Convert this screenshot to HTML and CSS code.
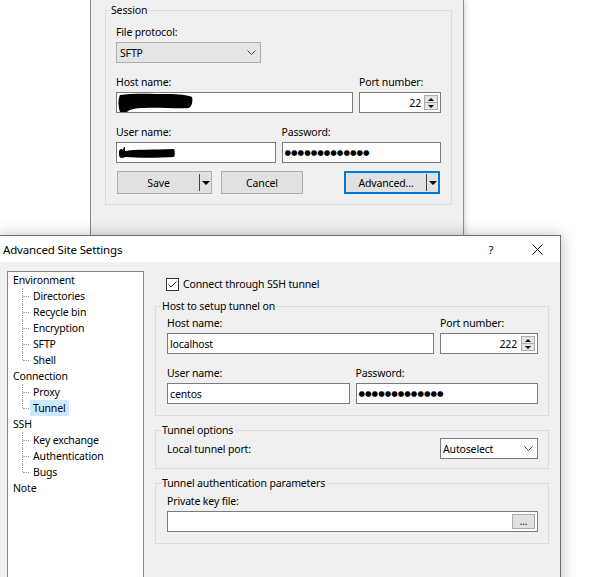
FILE: index.html
```html
<!DOCTYPE html>
<html lang="en">
<head>
  <meta charset="utf-8"/>
  <meta name="viewport" content="width=device-width,initial-scale=1"/>
  <title>Advanced Site Settings</title>
  <link rel="stylesheet" href="styles.css">
</head>
<body>
  <div class="desktop">

    <!-- login dialog, sitting behind the settings window -->
    <section class="window login">
      <div class="site-list"></div>
      <div class="login-pane">
        <fieldset class="group session">
          <legend>Session</legend>
          <div class="field">
            <span class="caption">File protocol:</span>
            <div class="combo protocol">
              <span>SFTP</span>
              <svg class="chev" width="9" height="5" viewBox="0 0 9 5"><path d="M.5 .5 4.5 4.5 8.5 .5"/></svg>
            </div>
          </div>
          <div class="cols cols-port">
            <div class="field">
              <span class="caption">Host name:</span>
              <div class="edit">
                <svg class="blot" width="76" height="20" viewBox="0 0 76 20"><path d="M2 2 C14 0 34 1 50 1 C60 1 70 2 74 4 C75 8 74 13 71 15 C58 16 40 14 26 15 C18 15 12 16 9 19 L2 19 C0 14 0 6 2 2 Z"/></svg>
              </div>
            </div>
            <div class="field">
              <span class="caption">Port number:</span>
              <div class="edit number">
                <span>22</span>
                <span class="spinner"><i class="up"></i><i class="down"></i></span>
              </div>
            </div>
          </div>
          <div class="cols cols-half">
            <div class="field">
              <span class="caption">User name:</span>
              <div class="edit">
                <svg class="blot" width="60" height="14" viewBox="0 0 60 14"><path d="M1 6 C1 3 4 2 5 4 L6 1 L7 1 L7 5 C16 3 36 4 56 3 C57 5 57 10 56 11 C40 12 20 12 8 11 L4 12 C1 12 1 9 1 6 Z"/></svg>
              </div>
            </div>
            <div class="field">
              <span class="caption">Password:</span>
              <div class="edit"><span class="dots">●●●●●●●●●●●●●</span></div>
            </div>
          </div>
          <div class="buttons">
            <button class="btn split save"><span class="label">Save</span><i class="drop"></i></button>
            <button class="btn cancel">Cancel</button>
            <button class="btn split advanced"><span class="label">Advanced...</span><i class="drop"></i></button>
          </div>
        </fieldset>
      </div>
    </section>

    <!-- advanced site settings dialog -->
    <section class="window settings">
      <header class="titlebar">
        <span class="title">Advanced Site Settings</span>
        <span class="caption-btn help">?</span>
        <span class="caption-btn close">
          <svg width="11" height="11" viewBox="0 0 11 11"><path d="M.5 .5 10.5 10.5 M10.5 .5 .5 10.5"/></svg>
        </span>
      </header>

      <div class="settings-body">
        <ul class="tree">
          <li><span class="node">Environment</span>
            <ul>
              <li><span class="node">Directories</span></li>
              <li><span class="node">Recycle bin</span></li>
              <li><span class="node">Encryption</span></li>
              <li><span class="node">SFTP</span></li>
              <li><span class="node">Shell</span></li>
            </ul>
          </li>
          <li><span class="node">Connection</span>
            <ul>
              <li><span class="node">Proxy</span></li>
              <li><span class="node selected">Tunnel</span></li>
            </ul>
          </li>
          <li><span class="node">SSH</span>
            <ul>
              <li><span class="node">Key exchange</span></li>
              <li><span class="node">Authentication</span></li>
              <li><span class="node">Bugs</span></li>
            </ul>
          </li>
          <li><span class="node">Note</span></li>
        </ul>

        <div class="page">
          <label class="check-row">
            <span class="checkbox">
              <svg width="13" height="13" viewBox="0 0 13 13"><path d="M2.5 6.5 5 9 10.5 3.5"/></svg>
            </span>
            Connect through SSH tunnel
          </label>

          <fieldset class="group tunnel-host">
            <legend>Host to setup tunnel on</legend>
            <div class="cols cols-port">
              <div class="field">
                <span class="caption">Host name:</span>
                <div class="edit"><span>localhost</span></div>
              </div>
              <div class="field">
                <span class="caption">Port number:</span>
                <div class="edit number">
                  <span>222</span>
                  <span class="spinner"><i class="up"></i><i class="down"></i></span>
                </div>
              </div>
            </div>
            <div class="cols cols-half">
              <div class="field">
                <span class="caption">User name:</span>
                <div class="edit"><span>centos</span></div>
              </div>
              <div class="field">
                <span class="caption">Password:</span>
                <div class="edit"><span class="dots">●●●●●●●●●●●●●</span></div>
              </div>
            </div>
          </fieldset>

          <fieldset class="group tunnel-opts">
            <legend>Tunnel options</legend>
            <div class="row-between">
              <span>Local tunnel port:</span>
              <div class="combo local-port">
                <span>Autoselect</span>
                <svg class="chev" width="9" height="5" viewBox="0 0 9 5"><path d="M.5 .5 4.5 4.5 8.5 .5"/></svg>
              </div>
            </div>
          </fieldset>

          <fieldset class="group tunnel-auth">
            <legend>Tunnel authentication parameters</legend>
            <div class="field">
              <span class="caption">Private key file:</span>
              <div class="edit"><span class="browse">...</span></div>
            </div>
          </fieldset>
        </div>
      </div>
    </section>

  </div>
</body>
</html>
```

FILE: styles.css
```css
* {
  box-sizing: border-box;
}
body {
  margin: 0;
  background: #fff;
  font-family: "Noto Sans", sans-serif;
  font-size: 10.5px;
  letter-spacing: -0.15px;
  color: #000;
}
.desktop {
  position: relative;
  width: 599px;
  height: 577px;
  overflow: hidden;
}

/* windows */
.window {
  position: absolute;
  background: #f0f0f0;
}
.login {
  left: 0;
  top: 0;
  width: 464px;
  height: 236px;
  display: flex;
  border-right: 1px solid #8f8f8f;
  border-bottom: 1px solid #6d6d6d;
  box-shadow: 1px 1px 6px rgba(0, 0, 0, .18);
}
.site-list {
  width: 91px;
  background: #fff;
  border-right: 1px solid #828790;
}
.login-pane {
  flex: 1;
  padding: 0 11px 0 14px;
}
.settings {
  left: -1px;
  top: 235px;
  width: 562px;
  height: 380px;
  border: 1px solid #6d6d6d;
  box-shadow: 0 0 14px rgba(0, 0, 0, .25);
}

/* group boxes */
.group {
  margin: 0;
  min-width: 0;
  border: 1px solid #dcdcdc;
  padding: 6px 10px 10px;
}
.group legend {
  padding: 0 1px;
  margin-left: -6px;
  line-height: 16px;
}
.session {
  margin-top: 2px;
}

/* form bits */
.field {
  display: flex;
  flex-direction: column;
}
.caption {
  height: 16px;
  line-height: 16px;
  margin-bottom: 2px;
  white-space: nowrap;
}
.edit,
.combo {
  height: 21px;
  display: flex;
  align-items: center;
  padding-left: 2px;
  border: 1px solid #7a7a7a;
  background: #fff;
  white-space: nowrap;
}
.combo .chev {
  margin-left: auto;
  fill: none;
  stroke: #444;
  stroke-width: 1;
}
.protocol {
  width: 145px;
  padding-left: 3px;
  background: #e5e5e5;
  border-color: #adadad;
}
.protocol .chev {
  margin-right: 4px;
}
.local-port {
  width: 98px;
}
.local-port .chev {
  margin-right: 4px;
}
.cols {
  display: grid;
  gap: 6px;
}
.cols-half {
  grid-template-columns: 1fr 1fr;
}
.session .cols-port {
  grid-template-columns: 1fr 82px;
}
.tunnel-host .cols-port {
  grid-template-columns: 1fr 98px;
}
.session .cols {
  margin-top: 11px;
}
.tunnel-host .cols-half {
  margin-top: 11px;
}
.blot {
  display: block;
  margin-left: -1px;
  fill: #000;
}
.dots {
  font-family: "DejaVu Sans", sans-serif;
  font-size: 7.5px;
  letter-spacing: 0;
}
.number {
  justify-content: flex-end;
  padding-right: 2px;
}
.session .number .spinner {
  margin-left: 3px;
}
.tunnel-host .number .spinner {
  margin-left: 4px;
}
.spinner {
  display: flex;
  flex-direction: column;
  width: 14px;
  height: 15px;
}
.spinner i {
  flex: 1;
  display: flex;
  align-items: center;
  justify-content: center;
  border: 1px solid #adadad;
  background: #e5e5e5;
}
.spinner i + i {
  border-top: none;
}
.spinner i::before {
  content: "";
  border-left: 3px solid transparent;
  border-right: 3px solid transparent;
}
.spinner .up::before {
  border-bottom: 3px solid #000;
}
.spinner .down::before {
  border-top: 3px solid #000;
}

/* buttons */
.buttons {
  display: flex;
  gap: 9px;
  margin-top: 8px;
}
.btn {
  height: 23px;
  display: flex;
  align-items: center;
  padding: 0;
  border: 1px solid #adadad;
  background: #e1e1e1;
  font: inherit;
  letter-spacing: inherit;
  color: #000;
}
.btn .label {
  flex: 1;
  text-align: center;
}
.save {
  width: 95px;
  margin-left: 1px;
}
.cancel {
  width: 82px;
  justify-content: center;
}
.advanced {
  width: 96px;
  margin-left: auto;
  margin-right: 1px;
  border: 2px solid #0078d7;
}
.drop {
  width: 12px;
  height: 17px;
  display: flex;
  align-items: center;
  justify-content: center;
  border-left: 1px solid #404040;
}
.drop::before {
  content: "";
  border-left: 4px solid transparent;
  border-right: 4px solid transparent;
  border-top: 4px solid #000;
}

/* title bar */
.titlebar {
  height: 26px;
  display: flex;
  align-items: center;
  background: #fff;
  font-size: 11.5px;
}
.title {
  padding-left: 3px;
}
.caption-btn {
  width: 46px;
  height: 26px;
  display: flex;
  align-items: center;
  justify-content: center;
}
.help {
  margin-left: auto;
}
.close svg {
  fill: none;
  stroke: #000;
  stroke-width: 1;
}

/* body of the settings dialog */
.settings-body {
  display: flex;
  gap: 11px;
  padding: 9px 11px 0 7px;
}
.tree {
  flex: none;
  width: 137px;
  height: 330px;
  margin: 0;
  padding: 0;
  list-style: none;
  background: #fff;
  border: 1px solid #828790;
}
.tree li {
  line-height: 16px;
}
.tree ul {
  list-style: none;
  margin: 0;
  padding: 0 0 0 22px;
}
.tree .node {
  display: inline-block;
  height: 16px;
  padding: 0 3px;
  vertical-align: top;
  white-space: nowrap;
}
.tree > li > .node {
  padding-left: 5px;
}
.tree ul li {
  position: relative;
}
.tree ul li::before {
  content: "";
  position: absolute;
  left: -8px;
  top: 0;
  height: 16px;
  border-left: 1px dotted #a0a0a0;
}
.tree ul li:last-child::before {
  height: 8px;
}
.tree ul li::after {
  content: "";
  position: absolute;
  left: -7px;
  top: 8px;
  width: 6px;
  border-top: 1px dotted #a0a0a0;
}
.tree .selected {
  background: #cce8ff;
}

.page {
  flex: 1;
  display: flex;
  flex-direction: column;
}
.check-row {
  height: 16px;
  display: flex;
  align-items: center;
  gap: 4px;
  margin: 5px 0 0 11px;
}
.checkbox {
  width: 13px;
  height: 13px;
  border: 1px solid #333;
  background: #fff;
}
.checkbox svg {
  display: block;
  margin: -1px;
  fill: none;
  stroke: #222;
  stroke-width: 1;
}
.tunnel-host {
  margin-top: 6px;
  padding: 1px 10px 11px 11px;
}
.tunnel-opts {
  margin-top: 6px;
  padding: 0 10px 9px 11px;
}
.tunnel-auth {
  margin-top: 6px;
  padding: 2px 10px 11px 11px;
}
.row-between {
  display: flex;
  align-items: center;
  justify-content: space-between;
}
.browse {
  width: 23px;
  height: 15px;
  margin-left: auto;
  margin-right: 2px;
  border: 1px solid #adadad;
  background: #e1e1e1;
  font-size: 10px;
  line-height: 13px;
  text-align: center;
}
```
